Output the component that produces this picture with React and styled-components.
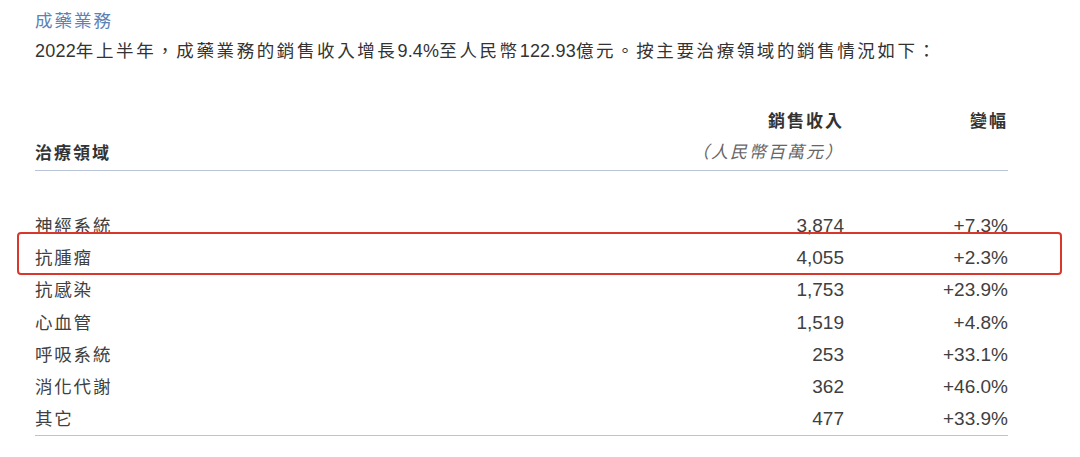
import React from "react";
import styled, { createGlobalStyle } from "styled-components";

const Global = createGlobalStyle`
  html, body { margin: 0; padding: 0; background: #fff; }
  body {
    font-family: "Liberation Sans", "Noto Sans CJK TC", sans-serif;
    color: #333;
  }
`;

const Page = styled.div`
  position: relative;
  width: 1080px;
  height: 457px;
  padding: 0 72px 0 35px;
  box-sizing: border-box;
  overflow: hidden;
`;

const SectionTitle = styled.h2`
  margin: 0;
  padding-top: 9px;
  height: 25px;
  line-height: 24px;
  font-size: 17.5px;
  font-weight: 400;
  letter-spacing: 2px;
  color: #5b82b6;
`;

const Intro = styled.p`
  margin: 0;
  padding-top: 4px;
  line-height: 26px;
  font-size: 17.5px;
  letter-spacing: 2.6px;
  color: #333;
`;

const Num = styled.span`
  font-size: 18px;
  letter-spacing: 0.2px;
`;

const Table = styled.div`
  display: grid;
  grid-template-columns: 1fr 240px 164px;
  margin-top: 42px;
`;

const HeadCell = styled.div`
  height: 32px;
  line-height: 32px;
  font-size: 17px;
  font-weight: 700;
  letter-spacing: 2px;
  color: #333;
  text-align: ${(p) => (p.$right ? "right" : "left")};
`;

const UnitCell = styled.div`
  height: 32px;
  line-height: 30px;
  font-size: 17px;
  font-style: italic;
  letter-spacing: 2px;
  color: #666;
  text-align: right;
`;

const Divider = styled.div`
  grid-column: 1 / -1;
  height: 1px;
  background: #b9c4d8;
  margin-bottom: ${(p) => p.$gap || 0}px;
`;

const Cell = styled.div`
  height: 32.2px;
  line-height: 32px;
  font-size: ${(p) => (p.$cjk ? "17.5px" : "19px")};
  color: #404040;
  letter-spacing: ${(p) => (p.$cjk ? "1.8px" : "0")};
  text-align: ${(p) => (p.$right ? "right" : "left")};
`;

const Highlight = styled.div`
  position: absolute;
  left: 17px;
  top: 232px;
  width: 1045px;
  height: 43px;
  box-sizing: border-box;
  border: 2px solid #d8382c;
  border-radius: 4px;
  pointer-events: none;
`;

const rows = [
  ["神經系統", "3,874", "+7.3%"],
  ["抗腫瘤", "4,055", "+2.3%"],
  ["抗感染", "1,753", "+23.9%"],
  ["心血管", "1,519", "+4.8%"],
  ["呼吸系統", "253", "+33.1%"],
  ["消化代謝", "362", "+46.0%"],
  ["其它", "477", "+33.9%"],
];

export default function App() {
  return (
    <>
      <Global />
      <Page>
        <SectionTitle>成藥業務</SectionTitle>
        <Intro>
          <Num>2022</Num>年上半年，成藥業務的銷售收入增長<Num>9.4%</Num>至人民幣
          <Num>122.93</Num>億元。按主要治療領域的銷售情況如下：
        </Intro>
        <Table>
          <HeadCell />
          <HeadCell $right>銷售收入</HeadCell>
          <HeadCell $right>變幅</HeadCell>
          <HeadCell>治療領域</HeadCell>
          <UnitCell>（人民幣百萬元）</UnitCell>
          <UnitCell />
          <Divider $gap={39} />
          {rows.map(([name, rev, chg]) => (
            <React.Fragment key={name}>
              <Cell $cjk>{name}</Cell>
              <Cell $right>{rev}</Cell>
              <Cell $right>{chg}</Cell>
            </React.Fragment>
          ))}
          <Divider />
        </Table>
        <Highlight />
      </Page>
    </>
  );
}
